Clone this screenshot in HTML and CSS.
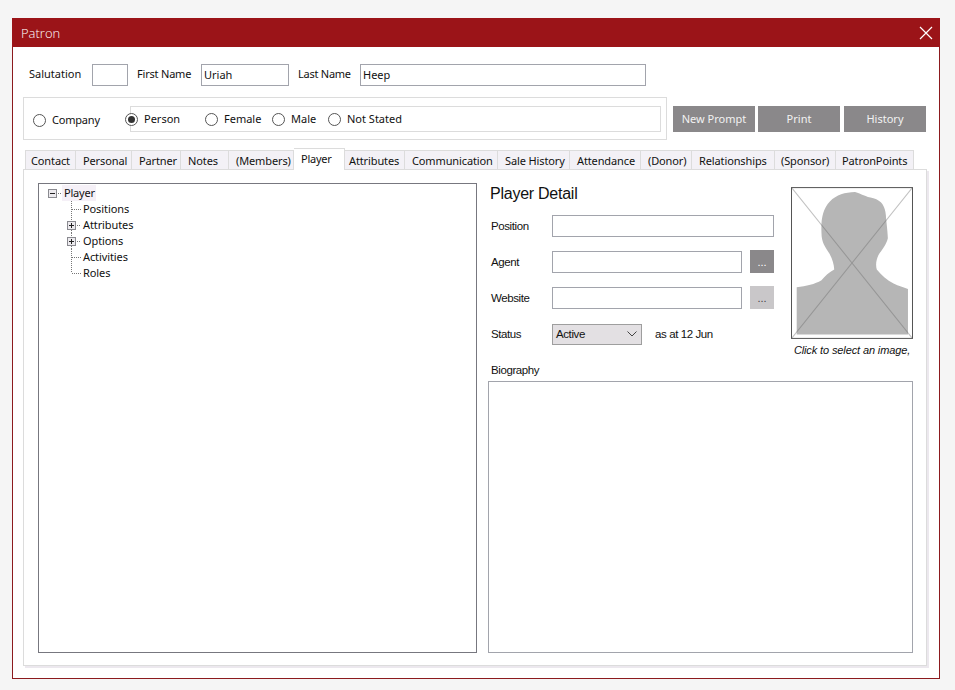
FILE: index.html
```html
<!DOCTYPE html>
<html lang="en">
<head>
<meta charset="utf-8">
<title>Patron</title>
<link rel="stylesheet" href="styles.css">
</head>
<body>
<div class="window">
  <div class="titlebar">
    <span class="title">Patron</span>
    <svg class="close" width="14" height="14" viewBox="0 0 14 14"><path d="M1 1L13 13M13 1L1 13" stroke="#fff" stroke-width="1.2" fill="none"/></svg>
  </div>
  <div class="name-row">
    <label class="lbl lbl-sal">Salutation</label><input class="txt in-sal">
    <label class="lbl lbl-first">First Name</label><input class="txt in-first" value="Uriah">
    <label class="lbl lbl-last">Last Name</label><input class="txt in-last" value="Heep">
  </div>
  <div class="type-row">
    <div class="group">
      <div class="opt opt-company"><span class="radio"></span><span class="opt-text">Company</span></div>
      <div class="inner">
        <div class="opt opt-person"><span class="radio on"></span><span class="opt-text">Person</span></div>
        <div class="opt opt-female"><span class="radio"></span><span class="opt-text">Female</span></div>
        <div class="opt opt-male"><span class="radio"></span><span class="opt-text">Male</span></div>
        <div class="opt"><span class="radio"></span><span class="opt-text">Not Stated</span></div>
      </div>
    </div>
    <div class="actions">
      <button class="act">New Prompt</button>
      <button class="act">Print</button>
      <button class="act act-last">History</button>
    </div>
  </div>
  <div class="tabs">
    <div class="tab">Contact</div>
    <div class="tab">Personal</div>
    <div class="tab">Partner</div>
    <div class="tab">Notes</div>
    <div class="tab">(Members)</div>
    <div class="tab active">Player</div>
    <div class="tab tab-after">Attributes</div>
    <div class="tab">Communication</div>
    <div class="tab">Sale History</div>
    <div class="tab">Attendance</div>
    <div class="tab">(Donor)</div>
    <div class="tab">Relationships</div>
    <div class="tab tab-tight">(Sponsor)</div>
    <div class="tab tab-tight">PatronPoints</div>
  </div>
  <div class="panel">
    <div class="tree">
      <div class="node root">
        <svg class="tw" width="16" height="16" viewBox="0 0 16 16"><rect x="1.500" y="4.500" width="8" height="8" fill="#eceaee" stroke="#8a8a90"/><path d="M3 8.500H8" stroke="#222"/><path d="M11 8.500H15" stroke="#777" stroke-dasharray="1 1"/></svg>
        <span class="node-text sel">Player</span>
      </div>
      <div class="node child">
        <svg class="tw" width="16" height="16" viewBox="0 0 16 16"><path d="M5.500 0V16M6 8.500H15" stroke="#777" stroke-dasharray="1 1" fill="none"/></svg>
        <span class="node-text">Positions</span>
      </div>
      <div class="node child">
        <svg class="tw" width="16" height="16" viewBox="0 0 16 16"><path d="M5.500 0V4M5.500 13V16M11 8.500H15" stroke="#777" stroke-dasharray="1 1" fill="none"/><rect x="1.500" y="4.500" width="8" height="8" fill="#eceaee" stroke="#8a8a90"/><path d="M3 8.500H8M5.500 6V11" stroke="#222"/></svg>
        <span class="node-text">Attributes</span>
      </div>
      <div class="node child">
        <svg class="tw" width="16" height="16" viewBox="0 0 16 16"><path d="M5.500 0V4M5.500 13V16M11 8.500H15" stroke="#777" stroke-dasharray="1 1" fill="none"/><rect x="1.500" y="4.500" width="8" height="8" fill="#eceaee" stroke="#8a8a90"/><path d="M3 8.500H8M5.500 6V11" stroke="#222"/></svg>
        <span class="node-text">Options</span>
      </div>
      <div class="node child">
        <svg class="tw" width="16" height="16" viewBox="0 0 16 16"><path d="M5.500 0V16M6 8.500H15" stroke="#777" stroke-dasharray="1 1" fill="none"/></svg>
        <span class="node-text">Activities</span>
      </div>
      <div class="node child">
        <svg class="tw" width="16" height="16" viewBox="0 0 16 16"><path d="M5.500 0V8M6 8.500H15" stroke="#777" stroke-dasharray="1 1" fill="none"/></svg>
        <span class="node-text">Roles</span>
      </div>
    </div>
    <div class="detail">
      <div class="detail-top">
        <div class="fields">
          <h2 class="heading">Player Detail</h2>
          <div class="form">
            <span class="flabel">Position</span><input class="txt span3">
            <span class="flabel">Agent</span><input class="txt"><button class="dots dark">...</button>
            <span class="flabel">Website</span><input class="txt"><button class="dots light">...</button>
            <span class="flabel">Status</span>
            <div class="status-wrap">
              <div class="select"><span>Active</span><svg width="10" height="6" viewBox="0 0 10 6"><path d="M0.500 0.500L5 5L9.500 0.500" stroke="#444" fill="none"/></svg></div>
              <span class="asat">as at 12 Jun</span>
            </div>
          </div>
        </div>
        <div class="photo-col">
          <svg class="photo" width="122" height="152" viewBox="64 52 364 453">
            <rect x="64" y="52" width="364" height="453" fill="#fff"/>
            <path d="M81 351C110 347 135 342 155 330C165 318 178 306 193 298C192 282 187 262 175 245C165 230 155 215 155 190C153 150 158 118 180 95C200 75 225 68 255 67C275 72 285 82 310 85C335 92 345 110 347 135C348 155 352 175 353 205C348 225 335 240 325 255C318 270 316 285 320 298C335 315 350 330 370 340C385 347 400 352 413 356V492H81Z" fill="#b6b6b6"/>
            <path d="M67 55L425 502M425 55L67 502" stroke="#666" stroke-opacity=".4" stroke-width="3" fill="none"/>
            <rect x="65.500" y="53.500" width="361" height="450" fill="none" stroke="#555" stroke-width="3"/>
          </svg>
          <div class="caption">Click to select an image,</div>
        </div>
      </div>
      <div class="bio-label">Biography</div>
      <div class="bio"></div>
    </div>
  </div>
</div>
</body>
</html>
```
FILE: styles.css
```css
* { box-sizing: border-box; }
html, body { margin: 0; height: 100%; }
body {
  background: #f5f5f5;
  padding: 18px 0 0 12px;
  font-family: "Noto Sans", sans-serif;
  font-size: 11px;
  color: #111;
}
.window {
  width: 928px;
  height: 661px;
  background: #fff;
  border: 1px solid #8c1a1e;
  border-top: 0;
  display: flex;
  flex-direction: column;
}
.titlebar {
  height: 29px;
  margin: 0 -1px;
  background: #9b1418;
  color: #fff;
  display: flex;
  align-items: center;
  justify-content: space-between;
  padding: 0 7px 0 9px;
}
.title { font-family: "Open Sans", sans-serif; font-size: 13px; font-weight: 300; }
.name-row {
  margin: 17px 0 0 16px;
  display: flex;
  align-items: center;
  height: 22px;
}
.lbl { display: block; margin-top: -4px; }
.lbl-sal { width: 63px; }
.lbl-first { width: 64px; margin-left: 9px; letter-spacing: -0.2px; }
.lbl-last { width: 62px; margin-left: 9px; letter-spacing: -0.25px; }
.txt {
  display: block;
  height: 22px;
  padding: 0 2px 2px;
  border: 1px solid #a2a4ac;
  background: #fff;
  font: inherit;
  color: #111;
  outline: 0;
  border-radius: 0;
}
.in-sal { width: 36px; }
.in-first { width: 88px; }
.in-last { width: 286px; }
.type-row { margin: 11px 0 0 10px; display: flex; align-items: flex-start; }
.group {
  width: 644px;
  height: 43px;
  border: 1px solid #dcdcdc;
  display: flex;
  align-items: flex-start;
  padding: 8px 5px 0 9px;
}
.opt { display: flex; align-items: center; height: 26px; }
.opt-company { width: 97px; margin-top: 1px; letter-spacing: -0.2px; }
.radio {
  width: 13px;
  height: 13px;
  border: 1px solid #555;
  border-radius: 50%;
  background: #fff;
  margin-right: 6px;
  flex: none;
  display: flex;
  align-items: center;
  justify-content: center;
}
.radio.on::after {
  content: "";
  width: 7px;
  height: 7px;
  border-radius: 50%;
  background: #333;
}
.opt-text { margin-top: -1px; }
.inner {
  flex: 1;
  height: 26px;
  border: 1px solid #dcdcdc;
  display: flex;
  align-items: center;
}
.opt-person { width: 80px; margin-left: -6px; }
.opt-female { width: 67px; }
.opt-male { width: 56px; }
.actions { display: flex; margin: 9px 0 0 6px; }
.act {
  width: 82px;
  height: 26px;
  margin-right: 3px;
  border: 0;
  background: #8a888a;
  color: #f2f2f2;
  font: inherit;
  padding: 0 0 2px;
}
.act:nth-child(2) { margin-right: 4px; }
.act-last { margin-right: 0; }
.tabs {
  margin: 8px 0 -1px 12px;
  height: 22px;
  display: grid;
  grid-template-columns: 51px 56px 49px 48px 65px 51px 60px 93px 72px 71px 51px 83px 61px 78px;
  align-items: end;
  position: relative;
  z-index: 1;
}
.tab {
  height: 20px;
  background: #f3f1f6;
  border: 1px solid #dcdcdc;
  border-left: 0;
  padding-left: 7px;
  letter-spacing: -0.12px;
  line-height: 20px;
  white-space: nowrap;
}
.tab:first-child { border-left: 1px solid #dcdcdc; padding-left: 5px; }
.tab.active {
  height: 22px;
  background: #fff;
  border-left: 0;
  border-right: 1px solid #dcdcdc;
  border-bottom: 0;
  line-height: 20px;
  padding-left: 7px;
  letter-spacing: -0.25px;
}
.tab-after { padding-left: 4px; }
.tab-tight { padding-left: 6px; }
.panel {
  margin-left: 10px;
  width: 904px;
  height: 497px;
  border: 1px solid #dcdcdc;
  box-shadow: 2px 2px 0 #ece8ee;
  padding: 13px 0 0 14px;
  display: flex;
}
.tree {
  width: 439px;
  height: 470px;
  border: 1px solid #77777f;
  padding: 1px 0 0 8px;
  flex: none;
  letter-spacing: -0.1px;
}
.node { display: flex; align-items: center; height: 16px; }
.child { padding-left: 19px; }
.tw { flex: none; }
.node-text { padding: 0 1px; line-height: 16px; }
.sel { background: #f5f0f7; margin-left: -1px; padding: 0 2px; width: 34px; letter-spacing: -0.2px; }
.detail {
  width: 425px;
  margin-left: 11px;
  display: flex;
  flex-direction: column;
  height: 470px;
}
.detail-top { display: flex; height: 179px; }
.fields { width: 286px; }
.heading {
  margin: 0;
  height: 32px;
  padding-left: 2px;
  font: 400 16px/21px "Liberation Sans", sans-serif;
  letter-spacing: -0.25px;
  color: #111;
}
.form {
  display: grid;
  grid-template-columns: 64px 190px 32px;
  grid-auto-rows: 22px;
  row-gap: 14px;
  align-items: center;
  font-family: "Liberation Sans", sans-serif;
  font-size: 11.5px;
  letter-spacing: -0.4px;
}
.form .txt { width: 190px; }
.form .span3 { grid-column: 2 / 4; width: 222px; }
.flabel { padding-left: 3px; }
.dots {
  width: 24px;
  height: 23px;
  border: 0;
  padding: 0;
  justify-self: end;
  margin-top: -1px;
  font: 11px "Liberation Sans", sans-serif;
}
.dark { background: #8a888a; color: #fff; }
.light { background: #c9c7c9; color: #444; }
.status-wrap { grid-column: 2 / 4; display: flex; align-items: center; }
.select {
  width: 90px;
  height: 21px;
  border: 1px solid #9e9e9e;
  background: #e3e0e3;
  display: flex;
  align-items: center;
  justify-content: space-between;
  padding: 0 4px 0 3px;
}
.asat { margin-left: 13px; }
.photo-col { margin: 4px 0 0 17px; width: 122px; display: flex; flex-direction: column; align-items: center; }
.photo { display: block; flex: none; }
.caption {
  margin-top: 4px;
  font: italic 11px/14px "Liberation Sans", sans-serif;
  letter-spacing: -0.12px;
  white-space: nowrap;
  color: #111;
}
.bio-label {
  height: 19px;
  padding-left: 3px;
  font: 11.5px/16px "Liberation Sans", sans-serif;
  letter-spacing: -0.4px;
}
.bio { flex: 1; border: 1px solid #a2a4ac; }
```
